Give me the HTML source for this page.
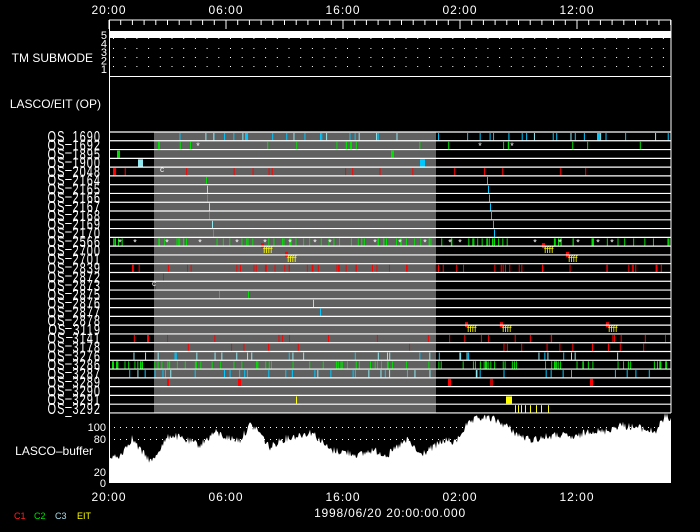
<!DOCTYPE html>
<html><head><meta charset="utf-8"><style>
html,body{margin:0;padding:0;background:#000;width:700px;height:532px;overflow:hidden}
svg{display:block}
text{font-family:"Liberation Sans",sans-serif;fill:#fff}
</style></head><body>
<svg id="s" width="700" height="532" viewBox="0 0 700 532" xmlns="http://www.w3.org/2000/svg">
<rect width="700" height="532" fill="#000"/>
<g id="g"></g>
</svg>
<script>
const NS="http://www.w3.org/2000/svg",g=document.getElementById('g');
function el(t,a,txt){const e=document.createElementNS(NS,t);for(const k in a)e.setAttribute(k,a[k]);if(txt!==undefined)e.textContent=txt;g.appendChild(e);return e;}
let seed=12345;function rnd(){seed=(seed*1103515245+12345)&0x7fffffff;return seed/0x7fffffff;}
const X0=109,X1=671,GX0=154,GX1=436,Y0=132,RH=8.78,N=32;
const tl=[[109,"20:00"],[226,"06:00"],[343,"16:00"],[460,"02:00"],[577,"12:00"]];
tl.forEach(([x,t])=>{el('text',{x:x,y:14,'font-size':12,'text-anchor':'middle','letter-spacing':1},t);el('text',{x:x,y:501,'font-size':12,'text-anchor':'middle','letter-spacing':1},t);});
el('line',{x1:X0,y1:20,x2:X1,y2:20,stroke:'#fff'});
for(let h=0;h<=48;h++){const x=X0+h*11.7;if(x>X1)break;const maj=(h%10==0);el('line',{x1:x,y1:20,x2:x,y2:maj?29:25,stroke:'#fff'});}
el('line',{x1:X0+0.5,y1:20,x2:X0+0.5,y2:483,stroke:'#fff'});
el('line',{x1:X1,y1:20,x2:X1,y2:413,stroke:'#fff'});
el('rect',{x:X0,y:31,width:X1-X0,height:7,fill:'#fff'});
for(let yy of [38,48,57,66]){for(let x=X0+4;x<X1;x+=11.7)el('rect',{x:x,y:yy,width:1,height:1,fill:'#fff'});}
el('line',{x1:X0,y1:76.5,x2:X1,y2:76.5,stroke:'#fff'});
el('text',{x:93,y:62,'font-size':12,'text-anchor':'end'},'TM SUBMODE');
['5','4','3','2','1'].forEach((t,i)=>el('text',{x:107,y:39+i*8.5,'font-size':11,'text-anchor':'end'},t));
el('text',{x:101,y:108,'font-size':12,'text-anchor':'end'},'LASCO/EIT (OP)');
el('rect',{x:GX0,y:Y0,width:GX1-GX0,height:N*RH,fill:'#606060'});
const labels=["1690","1692","1895","1900","2048","2164","2165","2166","2167","2168","2169","2170","2566","2700","2701","2839","2872","2873","2875","2876","2877","2878","3119","3141","3178","3276","3286","3287","3289","3290","3291","3292"];
const RED='#ff0000',GRN='#00e000',CYN='#00c8ff',LCY='#90e8f0',YEL='#ffff00';
function mark(r,x,c,w){el('rect',{x:x,y:Y0+r*RH+1,width:w||1,height:RH-1.5,fill:c});}
function many(r,n,c,x0,x1,w){for(let i=0;i<n;i++)mark(r,x0+rnd()*(x1-x0),c,w);}
many(0,30,CYN,118,670);many(0,12,LCY,118,670);mark(0,245,CYN,2);mark(0,597,CYN,2);
many(1,16,GRN,130,670);mark(1,158,GRN,2);mark(1,350,GRN,2);
mark(2,117,GRN,3);mark(2,391,GRN,3);
mark(3,138,LCY,5);mark(3,420,CYN,5);
many(4,16,RED,112,670);mark(4,113,RED,2);
[206,207,207,209,209,212,213].forEach((x,i)=>mark(5+i,x,i%2?LCY:GRN,1));
[487,488,489,490,491,493,494].forEach((x,i)=>mark(5+i,x,CYN,1));
many(12,90,GRN,110,670);
many(15,55,RED,115,670);
mark(16,163,RED,1);mark(17,155,RED,1);mark(18,219,GRN,1);mark(18,248,GRN,1);mark(19,313,LCY,1);mark(20,320,CYN,1);
many(23,22,RED,120,670);mark(23,147,RED,2);many(24,16,RED,120,670);
many(25,22,LCY,110,670);many(25,10,CYN,110,670);
many(26,90,GRN,110,670);mark(26,112,GRN,2);mark(26,116,GRN,2);
many(27,30,CYN,120,670);many(27,10,LCY,120,670);
mark(28,167,RED,2);mark(28,238,RED,3);mark(28,448,RED,3);mark(28,590,RED,3);mark(28,490,'#c00000',3);
mark(30,296,YEL,1);mark(30,506,YEL,6);
[515,518,521,525,530,536,541,548].forEach(x=>mark(31,x,YEL,1));
function star(r,x){el('text',{x:x,y:Y0+r*RH+8,'font-size':9,'text-anchor':'middle'},'*');}
[198,480,512].forEach(x=>star(1,x));
[120,135,167,200,237,265,290,315,330,375,400,425,450,460,535,560,578,598,612].forEach(x=>star(12,x));
function flag(r,x){el('rect',{x:x,y:Y0+r*RH-3,width:3,height:5,fill:RED});el('text',{x:x+2,y:Y0+r*RH+7,'font-size':9,style:'fill:#ff0'},'ffff');}
flag(13,261);flag(14,285);flag(13,542);flag(14,566);
flag(22,465);flag(22,500);flag(22,606);
el('text',{x:160,y:172,'font-size':8},'c');el('text',{x:152,y:286,'font-size':8},'c');
for(let i=0;i<=N;i++){const y=Y0+i*RH;el('line',{x1:X0,y1:y,x2:X1,y2:y,stroke:'#fff','stroke-width':1.2});}
labels.forEach((l,i)=>{el('text',{x:101,y:0,'font-size':11,'text-anchor':'end','letter-spacing':1,transform:`translate(0 ${Y0+(i+1)*RH+1}) scale(1 1.45)`},'OS_'+l);});
el('text',{x:93,y:455,'font-size':12,'text-anchor':'end'},'LASCO\u2013buffer');
[['100',431],['80',443],['20',476],['0',487]].forEach(([t,y])=>el('text',{x:106,y:y,'font-size':11,'text-anchor':'end'},t));
for(let yy of [427,439])for(let x=X0+5;x<X1;x+=6)el('rect',{x:x,y:yy,width:1,height:1,fill:'#fff'});
const kp=[[109,455],[118,458],[132,438],[140,450],[152,462],[160,448],[170,435],[178,437],[185,440],[200,445],[215,432],[228,438],[240,440],[250,425],[258,430],[270,448],[280,440],[300,435],[312,432],[330,450],[345,452],[360,455],[372,450],[388,455],[400,445],[408,440],[420,455],[432,448],[445,440],[455,443],[465,427],[478,418],[490,418],[500,422],[508,427],[518,435],[530,440],[545,437],[560,435],[575,438],[590,430],[603,432],[620,425],[640,428],[655,432],[665,417],[671,418]];
function interp(x){for(let i=0;i<kp.length-1;i++){if(x>=kp[i][0]&&x<=kp[i+1][0]){const t=(x-kp[i][0])/(kp[i+1][0]-kp[i][0]);return kp[i][1]+t*(kp[i+1][1]-kp[i][1]);}}return 430;}
let d=`M${X0+1} 483`;for(let x=X0+1;x<=X1;x+=1){const y=interp(x)+(rnd()-0.5)*8;d+=` L${x} ${y.toFixed(1)}`;}d+=` L${X1} 483 Z`;
el('path',{d:d,fill:'#fff'});
el('text',{x:390,y:517,'font-size':12,'text-anchor':'middle','letter-spacing':0.8},'1998/06/20  20:00:00.000');
[['C1','#ff2020',14],['C2','#00e000',34],['C3','#a0e0f0',55],['EIT','#ffff00',77]].forEach(([t,c,x])=>{const e=el('text',{x:x,y:519,'font-size':9},t);e.style.fill=c;});
</script>
</body></html>
